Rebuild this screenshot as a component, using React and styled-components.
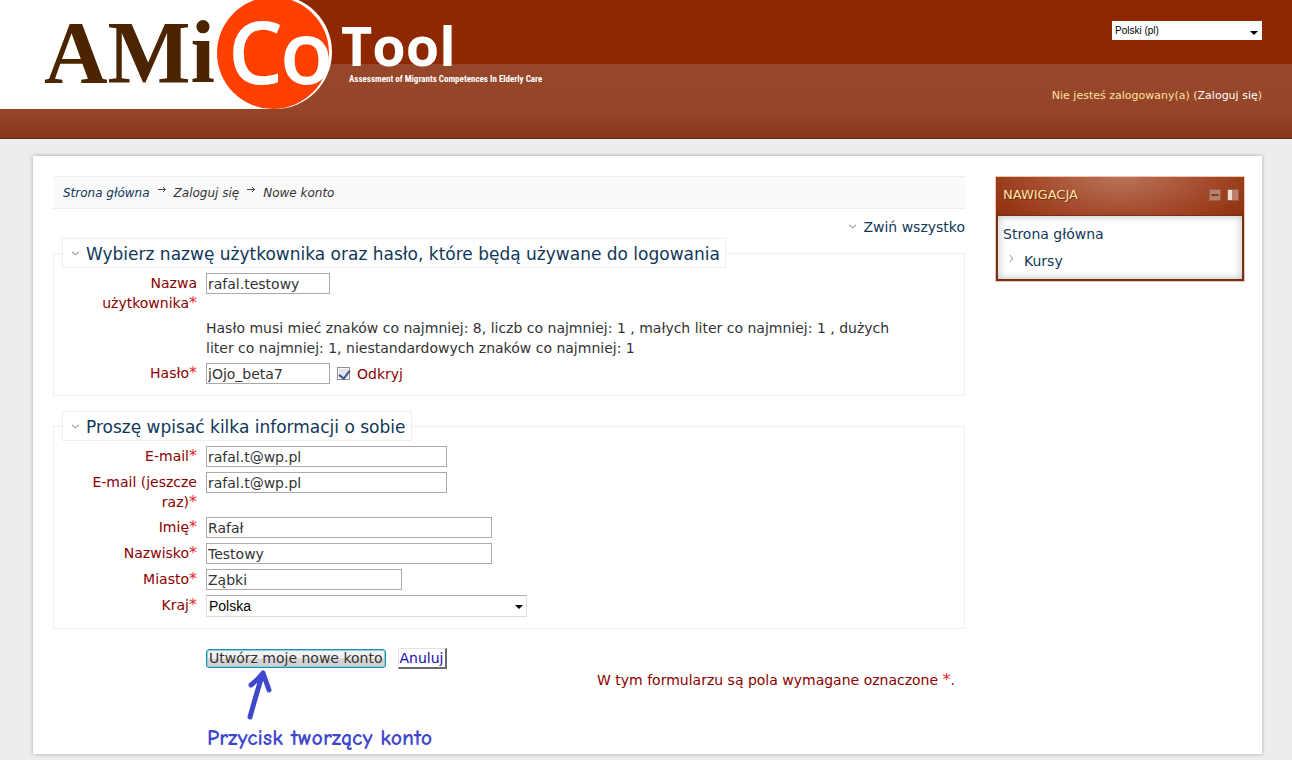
import React, { useState } from 'react';
import styled, { createGlobalStyle } from 'styled-components';

const GlobalStyle = createGlobalStyle`
    * {
        box-sizing: border-box;
    }

    body {
        margin: 0;
        background-color: #ededed;
        color: #333;
        font-family: Verdana, "DejaVu Sans", sans-serif;
        font-size: 14px;
        line-height: 20px;
    }

    a {
        color: #113759;
        text-decoration: none;
    }

    input, select, button {
        font: inherit;
        color: inherit;
        margin: 0;
    }
`;

const Header = styled.header`
    display: flex;
    justify-content: space-between;
    height: 139px;
    padding-right: 30px;
    border-bottom: 1px solid #5e2c19;
    background: linear-gradient(#8e2800 0 64px, #96472a 64px, #964528 110px, #89371a 100%);
`;

const Logo = styled.svg`
    display: block;
    flex: none;
`;

const HeaderMenu = styled.div`
    display: flex;
    flex-direction: column;
    align-items: flex-end;
    gap: 47px;
    padding-top: 21px;
    font-size: 11px;
`;

const LoginInfo = styled.div`
    line-height: 18px;
    color: #ffe1a0;

    a {
        color: #fff;
    }
`;

const SelectBox = styled.div`
    position: relative;
    width: ${(props) => props.$width}px;

    select {
        display: block;
        appearance: none;
        width: 100%;
        height: ${(props) => (props.$small ? 19 : 22)}px;
        padding: 0 20px 0 2px;
        border: 1px solid ${(props) => (props.$small ? '#fff' : '#ddd')};
        border-top-color: ${(props) => (props.$small ? '#fff' : '#aaa')};
        border-radius: 0;
        background-color: #fff;
        color: #000;
        font-family: Arial, "Liberation Sans", sans-serif;
        font-size: ${(props) => (props.$small ? 10 : 14)}px;
        line-height: 16px;
    }

    &::after {
        content: '';
        position: absolute;
        right: 4px;
        top: 10px;
        border: 4px solid transparent;
        border-top-color: #000;
        border-bottom: 0;
        pointer-events: none;
    }
`;

const Page = styled.div`
    display: flex;
    align-items: flex-start;
    gap: 30px;
    margin: 17px 30px 6px 33px;
    padding: 20px 17px 2px 20px;
    background-color: #fff;
    box-shadow: 0 0 4px rgba(0, 0, 0, 0.3);
`;

const Main = styled.main`
    flex: 1;
    min-width: 0;
`;

const Breadcrumb = styled.nav`
    display: flex;
    gap: 8px;
    padding: 6px 10px 5px;
    border: 1px solid #eee;
    border-width: 1px 0;
    background-color: #fafafa;
    font-size: 12px;
    font-style: italic;
`;

const Separator = styled.svg`
    margin-top: 2px;
`;

const CollapseAll = styled.div`
    display: flex;
    justify-content: flex-end;
    align-items: center;
    gap: 6px;
    padding: 8px 0 1px;
`;

const Fieldset = styled.fieldset`
    margin: 0 0 15px;
    padding: 5px 8px 11px;
    border: 1px solid #eee;
    min-width: 0;
`;

const Legend = styled.legend`
    padding: 5px 5px 3px 8px;
    border: 1px solid #eee;
    font-size: 17px;

    a {
        display: flex;
        align-items: center;
        gap: 6px;
    }
`;

const Row = styled.div`
    display: grid;
    grid-template-columns: 135px minmax(0, 700px);
    column-gap: 9px;

    & + & {
        margin-top: 5px;
    }
`;

const Label = styled.label`
    padding-left: 22px;
    color: #8b0000;
    text-align: right;
`;

const Star = styled.span`
    color: #e8262b;
    font-size: 16px;
    line-height: 1;
`;

const Field = styled.div`
    grid-column: 2;
    display: flex;
    align-items: center;
    align-self: start;
`;

const TextInput = styled.input`
    width: ${(props) => props.$width}px;
    height: 21px;
    padding: 0 1px;
    border: 1px solid #aaa;
    background-color: #fff;
`;

const Unmask = styled.label`
    display: flex;
    align-items: center;
    gap: 7px;
    margin-left: 7px;
    color: #8b0000;
`;

const Checkbox = styled.input`
    position: relative;
    appearance: none;
    width: 13px;
    height: 13px;
    border: 1px solid #8e8f8f;
    background-color: #dfe3e8;
    box-shadow: inset 0 0 0 1px #fff;

    &:checked::after {
        content: '';
        position: absolute;
        left: 3px;
        top: 0;
        width: 5px;
        height: 9px;
        border: solid #3c5591;
        border-width: 0 2px 2px 0;
        transform: rotate(38deg);
    }
`;

const Actions = styled.div`
    display: flex;
    align-items: center;
    gap: 12px;
    padding: 4px 0 0 153px;
`;

const SubmitButton = styled.button`
    height: 19px;
    padding: 0 2px;
    border: 1px solid #2c8ba6;
    border-radius: 3px;
    background: linear-gradient(#f2f2f2 45%, #d5d5d5 55%, #cfcfcf);
    box-shadow: inset 0 0 0 1px #7fd3e8;
    line-height: 17px;
    white-space: nowrap;
`;

const CancelButton = styled.button`
    height: 21px;
    padding: 0 1px;
    border: 1px solid #e3e3e3;
    border-right: 2px solid #696969;
    border-bottom: 2px solid #696969;
    background-color: #fff;
    color: #1a0dab;
    line-height: 18px;
`;

const Footer = styled.div`
    display: flex;
    justify-content: space-between;
    align-items: flex-start;
    padding: 1px 10px 0 154px;
`;

const Hint = styled.div`
    color: #3f48cc;
    font-family: "Comic Sans MS", "Comic Neue", "Open Sans", sans-serif;
    font-size: 22px;
    font-weight: bold;
    line-height: 28px;

    svg {
        display: block;
        margin-left: 36px;
    }
`;

const Required = styled.div`
    color: #8b0000;
`;

const Block = styled.aside`
    flex: none;
    width: 250px;
    border: 1px solid #f3c4ae;
`;

const BlockHeader = styled.div`
    display: flex;
    justify-content: space-between;
    align-items: center;
    height: 38px;
    padding: 0 5px 2px 7px;
    background: radial-gradient(ellipse 150px 60px at 50% 0, #b9745a, #a44a2c 60%, #90310d);

    h2 {
        margin: 0;
        color: #ffe1a0;
        font-size: 13px;
        font-weight: normal;
        text-shadow: 1px 1px 1px #5e2c19;
    }
`;

const BlockContent = styled.ul`
    margin: 0;
    padding: 8px 5px;
    border: 2px solid #74301a;
    border-top-width: 1px;
    box-shadow: inset 0 0 8px #bbb;
    list-style: none;

    li + li {
        display: flex;
        gap: 9px;
        margin-top: 7px;
        padding-left: 6px;
    }
`;

const Chevron = () => (
    <svg width="9" height="6" viewBox="0 0 9 6" fill="none" stroke="#777">
        <path d="M1 1c1 1 2.500 1.200 3.500 3C5.500 2.200 7 2 8 1" />
    </svg>
);

const Arrow = () => (
    <Separator width="8" height="8" viewBox="0 0 8 8" fill="none" stroke="#444">
        <path d="M0 4.500h7.500M5 2l2.500 2.500L5 7" />
    </Separator>
);

const SiteLogo = () => (
    <Logo width="620" height="109" viewBox="0 0 620 109" role="img" aria-label="AMiCo Tool">
        <rect width="275" height="109" fill="#fff" />
        <circle cx="275" cy="52" r="57" fill="#fff" />
        <circle cx="273" cy="53" r="56" fill="#ff4000" />
        <text x="44" y="82" fill="#4a2500" fontFamily="Liberation Serif, serif" fontWeight="bold" fontSize="88">AMi</text>
        <g fill="#fff" fontFamily="Open Sans, sans-serif">
            <text x="228" y="84" fontWeight="600" fontSize="87">C</text>
            <text x="280" y="84" fontWeight="600" fontSize="87">o</text>
            <text x="341" y="66" fontWeight="bold" fontSize="54">Tool</text>
        </g>
        <text x="349" y="82" fill="#fff" fontFamily="Roboto Condensed, Lato, sans-serif" fontWeight="bold" fontSize="9">
            Assessment of Migrants Competences In Elderly Care
        </text>
    </Logo>
);

const Section = ({ title, children }) => (
    <Fieldset>
        <Legend><a href="#section"><Chevron />{title}</a></Legend>
        {children}
    </Fieldset>
);

const FormRow = ({ id, label, children }) => (
    <Row>
        <Label htmlFor={id}>{label}<Star>*</Star></Label>
        <Field>{children}</Field>
    </Row>
);

const profileFields = [
    { id: 'email', label: 'E-mail', value: 'rafal.t@wp.pl', width: 241 },
    { id: 'email2', label: 'E-mail (jeszcze raz)', value: 'rafal.t@wp.pl', width: 241 },
    { id: 'firstname', label: 'Imię', value: 'Rafał', width: 286 },
    { id: 'lastname', label: 'Nazwisko', value: 'Testowy', width: 286 },
    { id: 'city', label: 'Miasto', value: 'Ząbki', width: 196 },
];

function App() {
    const [unmasked, setUnmasked] = useState(true);

    return (
        <>
            <GlobalStyle />
            <Header>
                <SiteLogo />
                <HeaderMenu>
                    <SelectBox $width={150} $small>
                        <select aria-label="Język" defaultValue="pl">
                            <option value="pl">Polski (pl)</option>
                        </select>
                    </SelectBox>
                    <LoginInfo>Nie jesteś zalogowany(a) (<a href="#login">Zaloguj się</a>)</LoginInfo>
                </HeaderMenu>
            </Header>
            <Page>
                <Main>
                    <Breadcrumb>
                        <a href="#home">Strona główna</a>
                        <Arrow />
                        <span>Zaloguj się</span>
                        <Arrow />
                        <span>Nowe konto</span>
                    </Breadcrumb>
                    <CollapseAll><Chevron /><a href="#collapse">Zwiń wszystko</a></CollapseAll>
                    <form onSubmit={(e) => e.preventDefault()}>
                        <Section title="Wybierz nazwę użytkownika oraz hasło, które będą używane do logowania">
                            <FormRow id="username" label="Nazwa użytkownika">
                                <TextInput id="username" type="text" defaultValue="rafal.testowy" $width={124} />
                            </FormRow>
                            <Row>
                                <Field>
                                    Hasło musi mieć znaków co najmniej: 8, liczb co najmniej: 1 , małych liter co najmniej: 1 , dużych liter co najmniej: 1, niestandardowych znaków co najmniej: 1
                                </Field>
                            </Row>
                            <FormRow id="password" label="Hasło">
                                <TextInput id="password" type={unmasked ? 'text' : 'password'} defaultValue="jOjo_beta7" $width={124} />
                                <Unmask>
                                    <Checkbox type="checkbox" checked={unmasked} onChange={(e) => setUnmasked(e.target.checked)} />
                                    Odkryj
                                </Unmask>
                            </FormRow>
                        </Section>
                        <Section title="Proszę wpisać kilka informacji o sobie">
                            {profileFields.map((field) => (
                                <FormRow key={field.id} id={field.id} label={field.label}>
                                    <TextInput id={field.id} type="text" defaultValue={field.value} $width={field.width} />
                                </FormRow>
                            ))}
                            <FormRow id="country" label="Kraj">
                                <SelectBox $width={321}>
                                    <select id="country" defaultValue="PL">
                                        <option value="PL">Polska</option>
                                    </select>
                                </SelectBox>
                            </FormRow>
                        </Section>
                        <Actions>
                            <SubmitButton type="submit">Utwórz moje nowe konto</SubmitButton>
                            <CancelButton type="button">Anuluj</CancelButton>
                        </Actions>
                        <Footer>
                            <Hint>
                                <svg width="32" height="54" viewBox="0 0 32 54" fill="none" stroke="#3f48cc" strokeWidth="5" strokeLinecap="round" strokeLinejoin="round">
                                    <path d="M7 47C11 33 15 18 20 3M8 15C13 11 17 7 20 3C22 9 24 14 26 20" />
                                </svg>
                                Przycisk tworzący konto
                            </Hint>
                            <Required>W tym formularzu są pola wymagane oznaczone <Star>*</Star>.</Required>
                        </Footer>
                    </form>
                </Main>
                <Block>
                    <BlockHeader>
                        <h2>NAWIGACJA</h2>
                        <svg width="30" height="12" viewBox="0 0 30 12">
                            <path d="M.5.5h11v11H.5z" fill="#ba8069" stroke="#98614e" />
                            <path d="M2.500 6h7" stroke="#71402e" strokeWidth="2" />
                            <path d="M18.500.5h11v11h-11z" fill="#ba8069" stroke="#98614e" />
                            <path d="M19 1h4v10h-4z" fill="#efdcd4" />
                        </svg>
                    </BlockHeader>
                    <BlockContent>
                        <li><a href="#home">Strona główna</a></li>
                        <li>
                            <svg width="6" height="12" viewBox="0 -3 6 12" fill="none" stroke="#888">
                                <path d="M1 1c1 1 1.200 2.500 3 3.500C2.200 5.500 2 7 1 8" />
                            </svg>
                            <a href="#courses">Kursy</a>
                        </li>
                    </BlockContent>
                </Block>
            </Page>
        </>
    );
}

export default App;
